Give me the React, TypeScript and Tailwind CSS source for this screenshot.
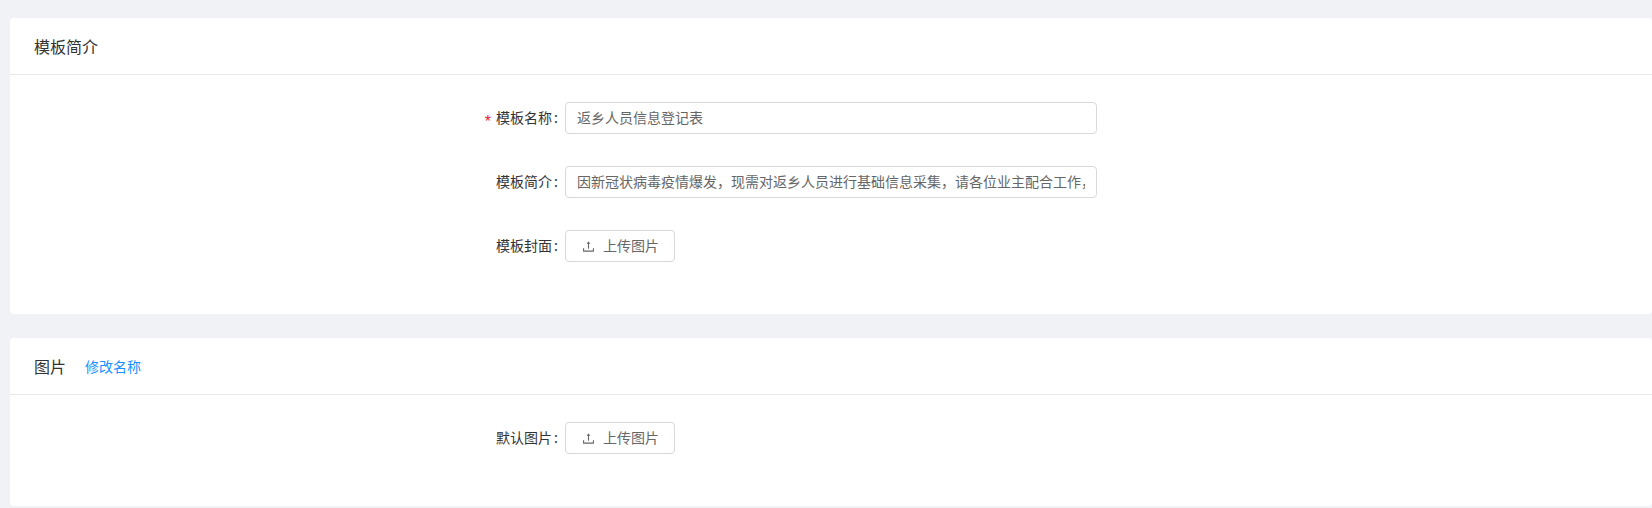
import { AiOutlineUpload } from 'react-icons/ai';

function UploadButton() {
    return (
        <button className="flex items-center h-8 px-[15px] bg-white border border-[#d9d9d9] rounded text-sm text-[#666666]">
            <AiOutlineUpload size={15} />
            <span className="ml-[7px] pb-0.5">上传图片</span>
        </button>
    );
}

function FormRow({ label, required, children }: { label: string; required?: boolean; children: React.ReactNode }) {
    return (
        <div className="flex items-center h-8">
            <label className="w-[555px] pr-[7px] pb-0.5 text-right text-sm text-[#333333] shrink-0">
                {required && <span className="text-[#e8192c] text-base leading-[0] mr-[5px] align-[-4px] font-['Liberation_Sans']">*</span>}
                {label}
                <span className="ml-0.5">:</span>
            </label>
            {children}
        </div>
    );
}

function TextField({ value }: { value: string }) {
    return (
        <input
            readOnly
            value={value}
            className="w-[532px] h-8 px-[11px] pb-0.5 border border-[#d9d9d9] rounded text-sm text-[#666666] bg-white outline-none"
        />
    );
}

export default function App() {
    return (
        <div
            className="min-h-[508px] bg-[#f0f2f5] pt-[18px] pl-[10px] pb-[2px] flex flex-col gap-6 overflow-hidden"
            style={{ fontFamily: '"Noto Sans CJK SC", "Liberation Sans", sans-serif' }}
        >
            <div className="bg-white rounded-sm h-[296px]">
                <div className="h-[57px] flex items-center px-6 border-b border-[#e8e8e8]">
                    <h2 className="text-base font-normal text-[#333333]">模板简介</h2>
                </div>
                <div className="pt-[27px] flex flex-col gap-8">
                    <FormRow label="模板名称" required>
                        <TextField value="返乡人员信息登记表" />
                    </FormRow>
                    <FormRow label="模板简介">
                        <TextField value="因新冠状病毒疫情爆发，现需对返乡人员进行基础信息采集，请各位业主配合工作，谢谢！" />
                    </FormRow>
                    <FormRow label="模板封面">
                        <UploadButton />
                    </FormRow>
                </div>
            </div>

            <div className="bg-white rounded-sm h-[168px]">
                <div className="h-[57px] flex items-center px-6 border-b border-[#e8e8e8]">
                    <h2 className="text-base font-normal text-[#333333]">图片</h2>
                    <a className="ml-[19px] text-sm text-[#1890ff]">修改名称</a>
                </div>
                <div className="pt-[27px]">
                    <FormRow label="默认图片">
                        <UploadButton />
                    </FormRow>
                </div>
            </div>
        </div>
    );
}
